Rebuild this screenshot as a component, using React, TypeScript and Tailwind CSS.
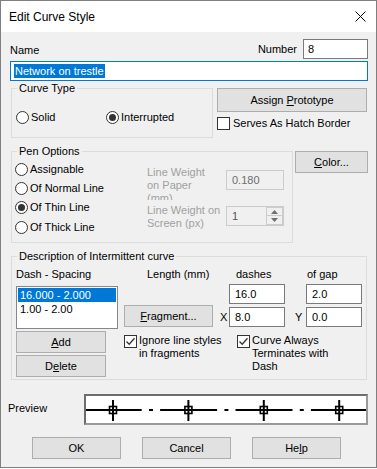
import React from "react";

const Btn = ({ children, className = "" }: { children: React.ReactNode; className?: string }) => (
  <div className={`flex items-center justify-center bg-[#e1e1e1] border border-[#adadad] shrink-0 ${className}`}>{children}</div>
);

const Radio = ({ checked = false }: { checked?: boolean }) => (
  <span className="w-[13px] h-[13px] rounded-full border border-[#333333] bg-white flex items-center justify-center shrink-0">
    {checked && <span className="w-[7px] h-[7px] rounded-full bg-[#333333]" />}
  </span>
);

const Check = ({ checked = false }: { checked?: boolean }) => (
  <span className="w-[13px] h-[13px] border border-[#333333] bg-white shrink-0 block">
    {checked && (
      <svg width="11" height="11" viewBox="0 0 11 11" className="block">
        <path d="M1.5 5.5 L4.2 8.2 L9.5 2.2" stroke="#333333" strokeWidth="1.3" fill="none" />
      </svg>
    )}
  </span>
);

const Edit = ({ value, className = "" }: { value: string; className?: string }) => (
  <div className={`h-[20px] border border-[#7a7a7a] bg-white pl-[5px] leading-[18px] ${className}`}>{value}</div>
);

function Preview() {
  const markers = [27, 102.4, 177.8, 253.2];
  const segs: React.ReactNode[] = [];
  markers.forEach((m, i) => {
    const start = i === 0 ? 0 : m - 28.3;
    const end = Math.min(m + 28.7, 280);
    segs.push(<line key={"s" + i} x1={start} y1={14} x2={end} y2={14} stroke="#000" strokeWidth={2} />);
    if (i < 3) segs.push(<line key={"d" + i} x1={m + 36} y1={14} x2={m + 40} y2={14} stroke="#000" strokeWidth={2} />);
    segs.push(<line key={"v" + i} x1={m} y1={4} x2={m} y2={25} stroke="#000" strokeWidth={2} />);
    segs.push(<rect key={"r" + i} x={m - 3.5} y={10.5} width={7} height={7} stroke="#000" strokeWidth={1.6} fill="none" />);
  });
  return (
    <svg width="280" height="27" viewBox="0 0 280 27" className="block">
      {segs}
    </svg>
  );
}

export default function App() {
  return (
    <div className="w-[377px] h-[468px] border border-[#7f7f7f] bg-[#f0f0f0] font-['Liberation_Sans',Arial,sans-serif] text-[11px] leading-[13px] text-black flex flex-col">
      {/* Title bar */}
      <div className="h-[31px] bg-white flex items-center justify-between pl-[8px] pr-[10px] shrink-0">
        <span className="text-[12px] leading-[16px]">Edit Curve Style</span>
        <svg width="11" height="11" viewBox="0 0 11 11" className="block">
          <path d="M0.5 0.5 L10.5 10.5 M10.5 0.5 L0.5 10.5" stroke="#000" strokeWidth="1" />
        </svg>
      </div>

      <div className="pl-[9px] pr-[8px] flex flex-col">
        {/* Name / Number */}
        <div className="mt-[7px] h-[20px] flex items-center justify-between">
          <span className="pt-[2px]">Name</span>
          <div className="flex items-center gap-[6px]">
            <span>Number</span>
            <div className="w-[65px] h-[20px] border border-[#7a7a7a] bg-white pl-[4px] leading-[18px]">8</div>
          </div>
        </div>
        <div className="mt-[2px] h-[20px] border border-[#0078d7] bg-white pl-[3px] pt-[2px]">
          <span className="inline-block h-[14px] leading-[14px] bg-[#0078d7] text-white px-[1px]">Network on trestle</span>
        </div>

        {/* Curve type row */}
        <div className="mt-[1px] flex items-start">
          <fieldset className="ml-[1px] w-[202px] h-[56px] border border-[#dcdcdc]">
            <legend className="ml-[5px] px-[2px] leading-[13px]">Curve Type</legend>
            <div className="mt-[16px] pl-[4px] flex items-center">
              <div className="w-[90px] flex items-center gap-[2px]">
                <Radio />
                <span>Solid</span>
              </div>
              <div className="flex items-center gap-[2px]">
                <Radio checked />
                <span>Interrupted</span>
              </div>
            </div>
          </fieldset>
          <div className="ml-[4px] flex flex-col">
            <Btn className="mt-[6px] w-[150px] h-[24px]">
              <span>
                Assign <u>P</u>rototype
              </span>
            </Btn>
            <div className="mt-[5px] flex items-center gap-[3px]">
              <Check />
              <span>Serves As Hatch Border</span>
            </div>
          </div>
        </div>

        {/* Pen options row */}
        <div className="mt-[7px] flex items-start">
          <fieldset className="ml-[1px] w-[282px] h-[98px] border border-[#dcdcdc]">
            <legend className="ml-[5px] px-[2px] leading-[13px]">Pen Options</legend>
            <div className="flex items-start">
              <div className="w-[135px] pl-[3px] pt-[2px] flex flex-col">
                <div className="h-[19px] flex items-center gap-[2px]">
                  <Radio />
                  <span>Assignable</span>
                </div>
                <div className="h-[19px] flex items-center gap-[2px]">
                  <Radio />
                  <span>Of Normal Line</span>
                </div>
                <div className="h-[19px] flex items-center gap-[2px]">
                  <Radio checked />
                  <span>Of Thin Line</span>
                </div>
                <div className="h-[20px] flex items-center gap-[2px]">
                  <Radio />
                  <span>Of Thick Line</span>
                </div>
              </div>
              <div className="w-[79px] flex flex-col text-[#a0a0a0] whitespace-nowrap">
                <div className="mt-[8px] h-[34px] overflow-hidden">
                  Line Weight
                  <br />
                  on Paper
                  <br />
                  (mm)
                </div>
                <div className="mt-[4px]">
                  Line Weight on
                  <br />
                  Screen (px)
                </div>
              </div>
              <div className="flex flex-col">
                <div className="mt-[12px] w-[58px] h-[20px] border border-[#cccccc] bg-[#f0f0f0] pl-[5px] leading-[18px] text-[#6d6d6d]">
                  0.180
                </div>
                <div className="mt-[16px] w-[58px] h-[20px] border border-[#cccccc] bg-[#f0f0f0] flex">
                  <span className="flex-1 pl-[5px] leading-[18px] text-[#555555]">1</span>
                  <div className="w-[17px] flex flex-col">
                    <div className="h-[9px] border border-[#cccccc] flex items-center justify-center">
                      <svg width="7" height="4" viewBox="0 0 7 4" className="block">
                        <path d="M0 4 L3.5 0 L7 4 Z" fill="#707070" />
                      </svg>
                    </div>
                    <div className="h-[9px] border border-t-0 border-[#cccccc] flex items-center justify-center">
                      <svg width="7" height="4" viewBox="0 0 7 4" className="block">
                        <path d="M0 0 L3.5 4 L7 0 Z" fill="#707070" />
                      </svg>
                    </div>
                  </div>
                </div>
              </div>
            </div>
          </fieldset>
          <Btn className="ml-[2px] mt-[6px] w-[73px] h-[22px]">
            <span>
              <u>C</u>olor...
            </span>
          </Btn>
        </div>

        {/* Description */}
        <fieldset className="mt-[7px] ml-[1px] w-[356px] h-[130px] border border-[#dcdcdc]">
          <legend className="ml-[5px] px-[2px] leading-[13px]">Description of Intermittent curve</legend>
          <div className="flex items-start pl-[4px]">
            <div className="w-[102px] flex flex-col">
              <span className="mt-[5px]">Dash - Spacing</span>
              <div className="mt-[5px] w-[102px] h-[43px] border border-[#828790] bg-white p-[1px]">
                <div className="h-[14px] leading-[14px] bg-[#0078d7] text-white pl-[2px]">16.000 - 2.000</div>
                <div className="h-[14px] leading-[14px] pl-[2px]">1.00 - 2.00</div>
              </div>
              <Btn className="mt-[2px] w-[90px] h-[22px]">
                <u>A</u>dd
              </Btn>
              <Btn className="mt-[2px] w-[90px] h-[22px]">
                <span>
                  D<u>e</u>lete
                </span>
              </Btn>
            </div>
            <div className="ml-[6px] flex flex-col">
              <div className="mt-[5px] h-[13px] flex">
                <span className="w-[112px] pl-[23px]">Length (mm)</span>
                <span className="w-[71px]">dashes</span>
                <span>of gap</span>
              </div>
              <div className="mt-[3px] flex">
                <Edit value="16.0" className="ml-[105px] w-[56px]" />
                <Edit value="2.0" className="ml-[21px] w-[56px]" />
              </div>
              <div className="mt-[1px] flex items-start">
                <Btn className="w-[89px] h-[22px]">
                  <span>
                    <u>F</u>ragment...
                  </span>
                </Btn>
                <span className="w-[16px] pl-[7px] mt-[2px] leading-[20px]">X</span>
                <Edit value="8.0" className="mt-[2px] w-[56px]" />
                <span className="w-[21px] pl-[10px] mt-[2px] leading-[20px]">Y</span>
                <Edit value="0.0" className="mt-[2px] w-[56px]" />
              </div>
              <div className="mt-[7px] flex items-start">
                <div className="w-[113px] flex items-start gap-[2px]">
                  <span className="mt-[1px]">
                    <Check checked />
                  </span>
                  <span>
                    Ignore line styles
                    <br />
                    in fragments
                  </span>
                </div>
                <div className="flex items-start gap-[2px]">
                  <span className="mt-[1px]">
                    <Check checked />
                  </span>
                  <span>
                    Curve Always
                    <br />
                    Terminates with
                    <br />
                    Dash
                  </span>
                </div>
              </div>
            </div>
          </div>
        </fieldset>

        {/* Preview */}
        <div className="mt-[14px] flex items-start">
          <span className="-ml-[2px] w-[76px] mt-[8px]">Preview</span>
          <div className="w-[284px] h-[31px] border-2 border-t-[#6d6d6d] border-l-[#6d6d6d] border-r-[#9a9a9a] border-b-[#9a9a9a] bg-white">
            <Preview />
          </div>
        </div>

        {/* Buttons */}
        <div className="mt-[12px] flex gap-[21px] pl-[22px]">
          <Btn className="w-[89px] h-[22px]">OK</Btn>
          <Btn className="w-[89px] h-[22px]">Cancel</Btn>
          <Btn className="w-[89px] h-[22px]">
            <span>
              He<u>l</u>p
            </span>
          </Btn>
        </div>
      </div>
    </div>
  );
}
